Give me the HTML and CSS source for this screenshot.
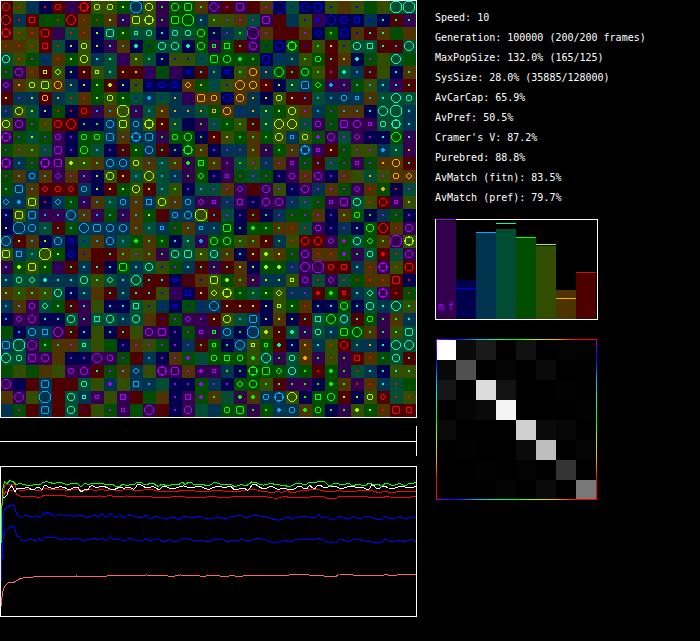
FILE: index.html
```html
<!DOCTYPE html>
<html lang="en">
<head>
    <meta charset="UTF-8">
    <meta name="viewport" content="width=device-width, initial-scale=1.0">
    <title>Population Simulation</title>
    <link rel="stylesheet" href="styles.css">
</head>
<body>
    <main>
        <section class="world-panel">
            <svg id="world" class="world" viewBox="0 0 417 418" role="img" aria-label="World grid"></svg>
            <div class="timeline"><div class="timeline-line"></div></div>
            <svg id="history" class="history" viewBox="3 3 1245 447" role="img" aria-label="History"></svg>
        </section>
        <section class="info-panel">
            <ul class="stats">
                <li>Speed: 10</li>
                <li>Generation: 100000 (200/200 frames)</li>
                <li>MaxPopSize: 132.0% (165/125)</li>
                <li>SysSize: 28.0% (35885/128000)</li>
                <li>AvCarCap: 65.9%</li>
                <li>AvPref: 50.5%</li>
                <li>Cramer's V: 87.2%</li>
                <li>Purebred: 88.8%</li>
                <li>AvMatch (fitn): 83.5%</li>
                <li>AvMatch (pref): 79.7%</li>
            </ul>
            <div id="bars" class="bars"></div>
            <div id="matrix" class="matrix"></div>
        </section>
    </main>
    <script src="script.js"></script>
</body>
</html>
```
FILE: styles.css
```css
/* Global Styles */
* {
    margin: 0;
    padding: 0;
    box-sizing: border-box;
}

body {
    background-color: #000;
    color: #fff;
    font-family: 'DejaVu Sans Mono', monospace;
    font-size: 10px;
    line-height: 20px;
}

main {
    display: flex;
    flex-wrap: wrap;
    gap: 18px;
}

/* World and history */
.world-panel {
    width: 417px;
    max-width: 100%;
}

.world,
.history {
    display: block;
    width: 100%;
    shape-rendering: crispEdges;
}

.timeline {
    height: 30px;
    margin: 8px 0 10px;
    padding-top: 15px;
    border-right: 1px solid #fff;
}

.timeline-line {
    height: 1px;
    background-color: #fff;
}

.history {
    border: 1px solid #fff;
}

.history polyline {
    fill: none;
    stroke-width: 3;
}

/* Stats */
.info-panel {
    flex: 1;
    padding-top: 8px;
}

.stats {
    list-style: none;
    margin-bottom: 11px;
    white-space: nowrap;
}

/* Bar chart */
.bars {
    display: flex;
    align-items: flex-end;
    width: 163px;
    height: 101px;
    border: 1px solid #fff;
}

.bar {
    position: relative;
    width: 20px;
}

.bar-marker {
    position: absolute;
    left: 0;
    width: 100%;
    height: 1px;
}

.bar-labels {
    position: absolute;
    left: 0;
    bottom: 2px;
    display: flex;
    justify-content: space-around;
    width: 100%;
    color: #aa00ff;
}

/* Match matrix */
.matrix {
    position: relative;
    display: grid;
    grid-template-columns: repeat(8, 20px);
    grid-auto-rows: 20px;
    width: 161px;
    margin: 19px 0 0 1px;
    padding-top: 1px;
}

.matrix::after {
    --rainbow: #aa00ff 0%, #0000ff 12%, #00aaff 25%, #00ffaa 37%, #00ff00 50%, #aaff00 62%, #ffaa00 75%, #ff0000 87%;
    content: '';
    position: absolute;
    inset: 0;
    background:
        linear-gradient(to right, var(--rainbow)) top / 100% 1px no-repeat,
        linear-gradient(to right, var(--rainbow)) bottom / 100% 1px no-repeat,
        linear-gradient(to bottom, var(--rainbow)) left / 1px 100% no-repeat,
        linear-gradient(to bottom, var(--rainbow)) right / 1px 100% no-repeat;
}
```
FILE: script.js
```js
const CELL = 13;

const dark = {
    v: '#33004d', b: '#00004d', c: '#00334d', t: '#004d33',
    g: '#004d00', o: '#334d00', n: '#4d3300', r: '#4d0000'
};
const bright = {
    v: '#aa00ff', b: '#0000ff', c: '#00aaff', t: '#00ffaa',
    g: '#00ff00', o: '#aaff00', n: '#ffaa00', r: '#ff0000'
};

// Each cell: background, symbol colour, symbol
const rows = [
    'rrO or. cx br. rro vx rr+ ooo ooo go. cc@ ooO vg. ggO ggM ng. vvD rv. vvM rx nv. bb@ tb. bbO bbM ob. nx ob. gx ox tt@ tt@',
    'rrQ cr. rrS gx gr. rrQ nr. gr. no. vt. ooM oo+ vg. ggM gg@ ct. og. ov. nv. tv. vvM rx cx ob. vb* bbQ bbO bbS cb. bt. rt. vt.',
    'rr+ or. nr. rrM vx tr. nr. bo. ttM go. tts tto bt. tto tto ggO bg. cv. tg. vv@ nv. rx rx nv. bbd gg. bbO nb. rt. nt. gx nx',
    'nr. nr. or. rrS tr. bo. ooo bo. vt. nc. bt* gb. ttO ttO bt* ggO vgs ggS rg. vvO gb. bbM gg+ rb. og. ro. ob. ttO ttS rt. rc. ttQ',
    'ttO or. gv. cb. nr. go. ooO ct. tt. vb. oo. tg. bt. ob. ob. tb. ggM ggO gg* gg. bbM cb. cg. og. ggo rt. nn. bt* gv. ox ttQ gx',
    'gv. vvO nr. ros ood bo. ro. oos tt. ro. ro. vb. gb. vb. bbs rt. cg. bbs og. nnO cn. ggQ rg. ggO og. rv. tt* cc. rc. ox bt. nt.',
    'vvd nn. ooo ooM nnO cn. bo. go. ro* bo. ob. bbs bbo bbo nnd gn. tb. ob. nnQ nnO rn. bo. to. ccM ggd vc* vc. gc. oc. ct. vt. rt.',
    'ro. cv. co. rno cn. tr. nr. go. ooo go. tb. cc* tb. cn. vb. nnM nno bbO nnO cn. bo. ooo ro. rc. tc. cc. cco ccs nc. tt. ttQ tto',
    'cv. ooO to. bo. gr. br. rro vc. nc. oo@ vc. tc. nn. cn. cn. tn. gns nnO cb. cn. to. go. ooO nv. cc. gv. nc. nc. bt. ttQ tt@ ct.',
    'ooO vvO gv. or. rrO rrQ bg. bg. ccO ooM cco oo+ ro. tn. bx vg. tv. gg. og. rg. to. ooQ ooQ tv. vvo gv. vvM vvO vvs tto tt+ ct.',
    'vv+ gv. to. gv. vvo bv. ggo ggo ccM nc. cc+ ccM vg. ggo ggO bg. rn. on. gg. ng. gg. ooO ccs ooo gv* vvO tv. vvd bv. bt. ggQ vt.',
    'gv. ov. og. tv. vvM bv. ggO tc. bv. rc. go. ccO rg. bg. gg+ ng. bv. cv. cv. ng. vg. gg. nc. cc+ vvs ro. gv. ov. ov. cc* tt. vn.',
    'vv+ cc. gv. vv+ vvM oo* oo. ng. ccO ccO ooo nc. tc. ng. vg* ggS ng. vv. tg. ov. cv. nv. vvs gv. rc. tv. gv. vvs gv. nn. nnO rt.',
    'gv. nc. cco nc. vvd nv. vc. bo. ooO ro. tc. ooQ tc. cc. vg. ggd bv. vvs gv. tv. gv. bv. vvo nv. vvO bv. nv. ox tn. ov. nno nnd',
    'gc. ccM nc. rrd rro rrd cco bo. ro. go. ooO ro. tc. og. bv. tc. tv. nv. vvd rx vvO ov. bv. vvO cv. nv. gv. vvd nr. gn* br. tv.',
    'ccd cc* ooM br. ccd gc. vc. nc. tc. cco nc. ccS ooO nc. cco vvd vvs cv. vvS bv. vvO vvO cv. tv. gv. vvs vvM ttO or. rrO vvs on.',
    'bc. ooM ccM vc. vc. ccQ nc. vc. gc. vc. nc. go. rx cco ccO oo@ rc. tv. bv. rg. bg. cv. gv. gv. nv. bv. ng. ggo bg. cv. gv. bv.',
    'bo. cc@ ccO tc. rc. gc. ccQ ccM ccO ccO nc. tc. ccs gv. nc. ccs cc. ggM bg. gg* gg. ng. nr. tr. vvo bv. cv. bt. ggO rrQ nr. vvO',
    'ccQ ro. nc. bo. ccO bbd tb. nc. ccO tc. gg* ng. gg. bt. tt. vc* ggO ggO og. ng. ro. cg. or. rrO rrO vvd gv* ttO ggd ng. vv@ oo+',
    'ooM ccS tc. oo@ go. bbo nb. rx rt. ng. ov. ng. vg. ttO ttM oo. ttO ng. bt. ro. oo* no. gv. vvO nr. nr. gv* vg. tto rr* tr. vvO',
    'vc. go* ooM go. vb. rt. ct. rt. bt. ggM ct. ttO ob. gv. ct. rt. vg. rt. no. bo. go* go* cv. vvQ vv@ rro rrS ct. nr. vv+ or. rrM',
    'ct. tto ttd ct* ct. ct. ttO ot. ttd ct. ttQ rt. rt. bbs rb. nb. ooM go* ng. vo. co. co. oos vvo tr. vvd tr. gr. nr. nr. rrM br.',
    'nt. ot. nt. ot. ttO bt. ct. nx rt. ct. rt. rt. ob. vb. bbS ro. ood oo+ gg. tg. go. ood cv. cv. rr* gg* rrs ct. ttd vv+ rr. gr.',
    'cc. nc. vvo ttd gt. rt. vt. ox bt. bt. ttS ob. cb. bbs gb. cb. ccQ ro. ro. ro. bo. oos go. nr. bt. bt. ggO bt. ttO ct. ttQ ot.',
    'bc. vvd vvO bt. bt. ttO vt. ttS ttO ct. ttO nx rb. gv. vvd vv. ro. ooO tc. ccM bo. no. bo. rt. ttS ggQ ttO rt. ggo vg. ng. ct.',
    'gx bc. ccO ccS vvQ rt. bt. ox bt. rt. ox vvO vvM bv. gv. vvs vgs ccO bg. cc@ oo* rt. tt* vt. tto ct. ggM ggQ ng. vg. ot. ttM',
    'ccM tt@ vvQ gt. nc. nv. tts ox gx bv. nv. ov. gv. bv. cv. rg. ggs bg. ccQ oos ggs rt* bt. nn. ct. or. rrO cg. cn. bt. ttQ ttQ',
    'ttQ tto vvM vvO nx bv. bv. vvQ vvo gv. rx cc. bv. nv. gv* tx ggo ggS ggo og* ttQ vg. tto nn* vg. or. vg. rrS nr. gc. ttO rt.',
    'gx ox gx nx ox vvo vvO rt. gv. nc. ccd ox vv+ vvM nv. vv* vvs cg. bg. gg+ ggM ggd ttO gg. rr. gg* vg. tr. ct. bt. ot. ot.',
    'vvQ bx rx ccM rx rx tto ox cv* ox ccS cc. tx bv. bv. gv* cv. bv. ggd ggO og. rt. vg. vg. bg. gg* ng. vr. nr. ct. tr. gx',
    'nx vvQ ox cc@ rx ttO cts vvs ox vvS rx gx nx bv. vvS gv* ng. tx vg* ng* cco cc+ ooQ bg. ggS ggO ro. bo. ooo rrd tr. or.',
    'cx gv. rx ccM rx ttO rb. ox gv. vvs gx vvQ rx bv. vvO tx cx ggo ggM vg. gg. cc* cco ng* ggo bg. vg. oo* go. nr. rrM rrS'
];

// Symbols are drawn around the middle of a cell
const outlines = {
    s: 'M-1.5-1.5H1.5V1.5H-1.5Z',
    S: 'M-2.5-2.5H2.5V2.5H-2.5Z',
    M: 'M-2.5-3.5H2.5L3.5-2.5V2.5L2.5 3.5H-2.5L-3.5 2.5V-2.5Z',
    d: 'M-.5-2.5H.5L2.5-.5V.5L.5 2.5H-.5L-2.5.5V-.5Z',
    D: 'M-.5-4.5H.5L4.5-.5V.5L.5 4.5H-.5L-4.5.5V-.5Z',
    o: 'M-1.5-2.5H1.5L2.5-1.5V1.5L1.5 2.5H-1.5L-2.5 1.5V-1.5Z',
    O: 'M-1.5-3.5H1.5L3.5-1.5V1.5L1.5 3.5H-1.5L-3.5 1.5V-1.5Z',
    Q: 'M-1.5-4.5H1.5L4.5-1.5V1.5L1.5 4.5H-1.5L-4.5 1.5V-1.5Z',
    '@': 'M-2.5-5.5H2.5L5.5-2.5V2.5L2.5 5.5H-2.5L-5.5 2.5V-2.5Z',
    '+': 'M-2.5-3.5H2.5L3.5-2.5V2.5L2.5 3.5H-2.5L-3.5 2.5V-2.5ZM-1-4.5H1M-1 4.5H1M-4.5-1V1M4.5-1V1'
};
const solids = {
    '.': 'M-1-1H1V1H-1Z',
    '*': 'M-1-2H1V-1H2V1H1V2H-1V1H-2V-1H-1Z'
};

function drawWorld() {
    let cells = '';
    let symbols = '';
    rows.forEach((row, j) => {
        row.split(' ').forEach((code, i) => {
            const x = i * CELL;
            const y = j * CELL + 1;
            cells += `<rect x="${x}" y="${y}" width="${CELL}" height="${CELL}" fill="${dark[code[0]]}"/>`;
            if (code[1] === 'x') return;
            const color = bright[code[1]];
            const shape = code[2];
            const paint = solids[shape] ? `fill="${color}"` : `fill="none" stroke="${color}"`;
            symbols += `<path transform="translate(${x + 6} ${y + 6})" d="${solids[shape] || outlines[shape]}" ${paint}/>`;
        });
    });
    const frame = '<rect x="0.5" y="0.5" width="416" height="417" fill="none" stroke="#fff"/>';
    document.getElementById('world').innerHTML = cells + symbols + frame;
}

// History lines: colour, wobble, x y pairs
const series = [
    ['#ff0000', 2, '5 120 9 85 14 58 30 55 44 54 50 70 66 74 100 71 125 73 133 67 180 72 187 69 210 73 240 70 250 75 280 72 300 70 315 73 332 69 345 73 380 70 400 74 440 70 480 77 545 74 600 77 640 74 680 77 730 74 770 72 820 79 840 78 860 74 870 79 900 75 960 72 1000 78 1020 74 1060 76 1120 75 1145 79 1155 75 1180 79 1248 75'],
    ['#ff0000', 1, '5 130 9 95 16 77 44 72 50 85 56 88 66 93 100 92 125 93 133 87 180 90 187 87 210 92 240 90 260 93 300 90 315 93 332 88 345 93 380 90 400 92 440 90 480 96 545 92 600 96 640 92 680 94 730 92 770 90 820 96 840 95 860 91 870 96 900 93 960 91 980 96 1010 96 1020 92 1060 92 1145 96 1155 92 1180 95 1248 92'],
    ['#ffffff', 3, '10 96 20 89 27 70 35 59 45 78 50 67 75 66 95 71 110 64 125 71 133 57 145 64 170 65 195 65 210 70 235 65 245 77 262 71 270 61 285 63 300 61 325 67 345 70 365 65 380 63 400 70 412 56 435 64 455 62 475 71 485 63 510 67 540 62 560 63 590 62 620 69 640 64 670 64 685 60 700 69 725 66 742 73 757 55 780 64 800 67 820 63 840 69 870 72 890 64 905 62 920 69 930 58 945 67 960 57 980 64 1010 62 1030 67 1060 61 1080 65 1103 72 1115 57 1130 68 1145 61 1165 66 1200 61 1220 65 1248 61'],
    ['#0000ff', 2, '4 345 5 230 9 150 14 127 25 124 30 117 43 117 50 145 66 155 78 148 95 152 125 151 130 137 137 144 145 138 155 148 170 149 185 144 200 151 210 148 235 149 255 153 275 149 295 152 302 144 315 153 332 144 345 153 360 148 370 156 385 147 415 155 440 147 448 157 465 152 495 159 510 154 540 161 545 152 570 156 595 151 615 157 650 155 670 158 690 153 725 150 740 155 770 147 790 152 820 160 845 161 865 152 880 157 920 152 950 155 958 147 968 155 1000 161 1018 151 1035 157 1060 152 1075 159 1090 153 1120 156 1145 162 1155 151 1180 159 1205 154 1220 158 1248 154'],
    ['#0000ff', 2, '4 345 6 280 9 224 14 200 25 188 35 180 43 180 50 210 60 215 67 225 85 220 105 225 115 217 125 225 130 214 170 216 185 220 210 221 225 216 245 222 270 220 285 217 300 221 310 218 320 223 332 213 345 221 370 224 385 216 410 224 440 218 448 225 465 218 490 228 505 221 515 227 545 219 575 222 600 224 615 228 640 221 670 222 690 226 705 222 725 219 740 225 770 218 800 223 830 231 860 223 870 227 900 221 945 219 965 220 985 229 1005 230 1020 219 1035 225 1060 221 1090 224 1145 228 1155 219 1180 228 1200 222 1220 226 1235 221 1248 225'],
    ['#00ff00', 2, '4 230 5 135 9 67 14 47 20 53 30 44 40 47 47 55 60 53 75 56 95 59 115 55 130 49 150 49 165 52 185 51 210 54 235 54 245 62 258 51 268 55 285 51 300 52 315 56 330 54 345 60 360 61 370 55 385 58 400 56 410 49 425 51 440 56 462 52 475 61 490 56 510 58 530 56 545 49 555 55 565 48 580 54 600 55 620 60 640 51 660 54 690 55 700 60 720 57 735 60 755 48 780 55 800 56 815 52 840 57 865 62 880 56 900 52 920 55 930 48 945 49 975 48 990 61 1010 51 1030 57 1050 54 1060 60 1080 55 1095 60 1110 52 1130 56 1145 61 1155 52 1170 55 1180 60 1200 53 1220 59 1230 51 1248 49'],
    ['#ff6666', 0, '4 420 7 380 14 362 27 348 44 348 60 338 80 333 95 334 110 330 150 331 200 333 230 330 310 333 330 328 380 329 440 327 460 329 490 328 515 332 540 327 580 328 610 331 640 327 680 333 690 329 720 331 750 328 860 329 875 324 905 326 950 328 1005 333 1018 324 1060 327 1130 327 1145 330 1155 325 1180 330 1200 324 1225 327 1248 324']
];

function drawHistory() {
    document.getElementById('history').innerHTML = series.map(([color, jitter, data]) => {
        const n = data.split(' ').map(Number);
        const points = [];
        for (let i = 0; i < n.length; i += 2) {
            points.push(`${n[i]},${n[i + 1]}`);
            // small wobble between two samples
            if (n[i] > 60 && i + 2 < n.length) {
                const x = (n[i] + n[i + 2]) / 2;
                const y = (n[i + 1] + n[i + 3]) / 2 + (i % 4 ? jitter : -jitter);
                points.push(`${x},${y}`);
            }
        }
        return `<polyline stroke="${color}" points="${points.join(' ')}"/>`;
    }).join('');
}

// Hue, bar height, marker height
const bars = [
    ['v', 98, 99], ['b', 39, 30], ['c', 86, 86], ['t', 90, 95],
    ['g', 81, 81], ['o', 73, 74], ['n', 29, 20], ['r', 45, 46]
];

function drawBars() {
    document.getElementById('bars').innerHTML = bars.map(([hue, height, marker]) =>
        `<div class="bar" style="height:${height}px;background:${dark[hue]}">` +
        `<div class="bar-marker" style="bottom:${marker}px;background:${bright[hue]}"></div>` +
        (hue === 'v' ? '<div class="bar-labels"><span>m</span><span>f</span></div>' : '') +
        '</div>').join('');
}

const matches = [
    [255, 10, 26, 0, 17, 0, 3, 2],
    [8, 80, 0, 5, 0, 10, 0, 0],
    [22, 0, 220, 18, 0, 0, 2, 0],
    [0, 5, 10, 244, 0, 0, 0, 2],
    [10, 0, 0, 0, 208, 10, 6, 0],
    [0, 2, 0, 0, 10, 190, 0, 5],
    [0, 0, 2, 0, 3, 0, 52, 0],
    [0, 0, 0, 4, 0, 10, 0, 120]
];

function drawMatrix() {
    document.getElementById('matrix').innerHTML = matches.flat().map(v =>
        `<div style="background:rgb(${v},${v},${v})"></div>`).join('');
}

drawWorld();
drawHistory();
drawBars();
drawMatrix();
```
